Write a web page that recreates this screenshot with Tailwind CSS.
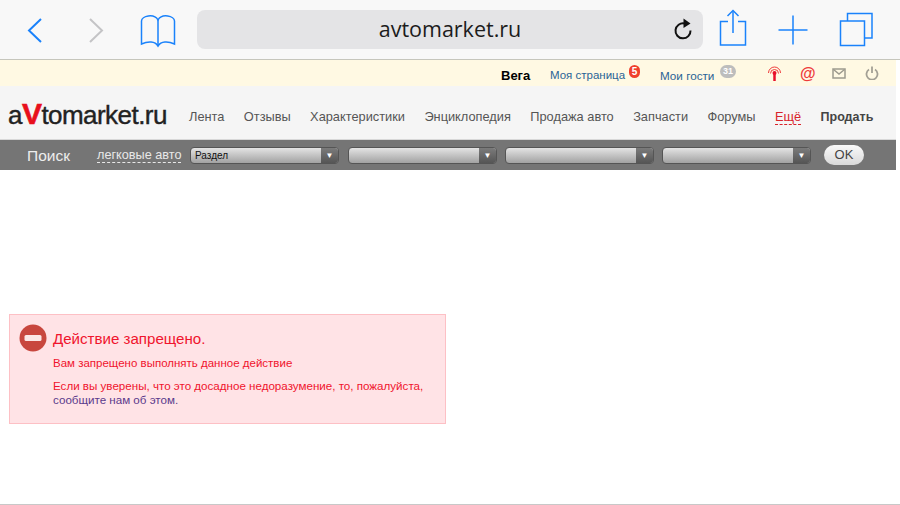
<!DOCTYPE html>
<html lang="ru">
<head>
    <meta charset="UTF-8">
    <title>avtomarket.ru</title>
    <script src="https://cdn.jsdelivr.net/npm/@tailwindcss/browser@4"></script>
</head>
<body class="w-[900px] h-[505px] overflow-hidden bg-white font-['Liberation_Sans',sans-serif] flex flex-col">
    <!-- safari toolbar -->
    <div class="h-[60px] shrink-0 bg-[#f8f8f8] border-b border-[#c6c6bc] flex items-center relative">
        <svg class="absolute left-[26px] top-[17px]" width="18" height="27" viewBox="0 0 18 27" fill="none" stroke="#1a82fb" stroke-width="2"><path d="M15 2 L3 13.5 L15 25"/></svg>
        <svg class="absolute left-[87px] top-[17px]" width="18" height="27" viewBox="0 0 18 27" fill="none" stroke="#c4c4c6" stroke-width="2"><path d="M3 2 L15 13.5 L3 25"/></svg>
        <svg class="absolute left-[140px] top-[14px]" width="36" height="34" viewBox="0 0 36 34" fill="none" stroke="#1a82fb" stroke-width="1.5"><path d="M1.5 30 V7 C1.5 2 14 -1 18 6 C22 -1 34.500 2 34.500 7 V30 C28 27 21 27 18 32 C15 27 8 27 1.500 30 Z"/><path d="M18 6 V32"/></svg>
        <div class="ml-[197px] w-[506px] h-[39px] rounded-lg bg-[#e4e4e6] flex items-center justify-center relative">
            <span class="text-[21.5px] text-[#1c1c1c] font-['Open_Sans',sans-serif]">avtomarket.ru</span>
            <svg class="absolute left-[476px] top-[8px]" width="20" height="23" viewBox="0 0 20 23" fill="none"><path d="M11.500 5.500 A7.500 7.500 0 1 0 17.500 12.500" stroke="#111" stroke-width="2"/><path d="M10.500 0.500 L17.500 5.500 L10.500 10 Z" fill="#111"/></svg>
        </div>
        <svg class="absolute left-[719px] top-[9px]" width="28" height="38" viewBox="0 0 28 38" fill="none" stroke="#1a82fb" stroke-width="1.500"><path d="M9 12.500 H1.500 V36 H26.500 V12.500 H19"/><path d="M14 24 V2.500"/><path d="M8.500 7 L14 1.500 L19.500 7"/></svg>
        <svg class="absolute left-[778px] top-[15px]" width="30" height="30" viewBox="0 0 30 30" fill="none" stroke="#1a82fb" stroke-width="1.500"><path d="M15 0.500 V29.500 M0.500 15 H29.500"/></svg>
        <svg class="absolute left-[839px] top-[12px]" width="35" height="35" viewBox="0 0 35 35" fill="none" stroke="#1a82fb" stroke-width="1.500"><rect x="1.500" y="9" width="24" height="24.500"/><path d="M8.500 9 V1.500 H33 V26 H25.500"/></svg>
    </div>

    <div class="w-[896px] flex flex-col">
        <!-- user bar -->
        <div class="h-[26px] bg-[#fff9e3] relative text-[#2a6496]">
            <span class="absolute left-[501px] top-[8px] text-[13px] leading-[15px] font-bold text-black">Вега</span>
            <span class="absolute left-[550px] top-[8px] text-[11.5px] leading-[15px]">Моя страница</span>
            <span class="absolute left-[629px] top-[5px] w-[11px] h-[13px] rounded-full bg-[#f0402c] text-white text-[10px] leading-[13px] text-center font-bold">5</span>
            <span class="absolute left-[660px] top-[8px] text-[11.7px] leading-[15px]">Мои гости</span>
            <span class="absolute left-[720px] top-[5px] w-[16px] h-[13px] rounded-full bg-[#bdbdbd] text-white text-[9px] leading-[13px] text-center font-bold">31</span>
            <svg class="absolute left-[767px] top-[6px]" width="15" height="16" viewBox="0 0 15 16" fill="none" stroke="#ee3b3b" stroke-width="1"><path d="M1.500 7 A6 6 0 0 1 13.500 7"/><path d="M3.500 7.500 A4 4 0 0 1 11.500 7.500"/><circle cx="7.500" cy="7" r="2" fill="#e8102a" stroke="none"/><path d="M7.500 8 V15" stroke="#e8102a" stroke-width="2.500"/></svg>
            <span class="absolute left-[800px] top-[5px] text-[16px] leading-[18px] font-bold text-[#ee3b3b]">@</span>
            <svg class="absolute left-[832px] top-[8px]" width="14" height="11" viewBox="0 0 14 11" fill="none" stroke="#9d9a8e" stroke-width="1.500"><rect x="1" y="1" width="12" height="9"/><path d="M1.500 1.500 L7 6 L12.500 1.500"/></svg>
            <svg class="absolute left-[865px] top-[6px]" width="14" height="14" viewBox="0 0 14 14" fill="none" stroke="#a3a095" stroke-width="1.800"><path d="M4 3.500 A5.500 5.500 0 1 0 10 3.500"/><path d="M7 0.500 V7"/></svg>
        </div>

        <!-- main nav -->
        <div class="h-[53px] bg-[#f5f5f5] flex items-center text-[12.8px] text-[#555]">
            <div class="ml-[8px] w-[181px] text-[26px] leading-[30px] tracking-[-0.55px] text-[#222] mt-[4px] [-webkit-text-stroke:0.4px_#222]">a<span class="text-[#e8101c] font-bold text-[30px] leading-[20px] [-webkit-text-stroke:0.6px_#e8101c]">V</span>tomarket.ru</div>
            <div class="flex gap-[19.4px] items-center mt-[9px]">
                <span>Лента</span>
                <span>Отзывы</span>
                <span>Характеристики</span>
                <span>Энциклопедия</span>
                <span>Продажа авто</span>
                <span>Запчасти</span>
                <span>Форумы</span>
                <span class="text-[#d8232a] border-b border-dashed border-[#d8232a] leading-[15px]">Ещё</span>
                <span class="font-bold text-[12.5px] text-[#444]">Продать</span>
            </div>
        </div>

        <!-- search bar -->
        <div class="h-[31px] bg-[#757575] border-t border-[#d8d8d8] flex items-center text-white">
            <span class="ml-[27px] mt-[1px] w-[70px] text-[15.5px] text-[#ededed]">Поиск</span>
            <span class="w-[84px] mr-[9px] text-[12.7px] leading-[14px] text-[#e8e8e8] border-b border-dashed border-[#e8e8e8] whitespace-nowrap">легковые авто</span>
            <div class="w-[149px] h-[17px] rounded-[4px] border border-[#555] bg-gradient-to-b from-[#e4e4e4] to-[#a2a2a2] flex justify-between overflow-hidden">
                <span class="pl-[4px] text-[10px] leading-[15px] text-[#111]">Раздел</span>
                <span class="w-[17px] bg-gradient-to-b from-[#7b7b7b] to-[#555] text-white text-[8px] leading-[15px] text-center">▼</span>
            </div>
            <div class="ml-[9px] w-[149px] h-[17px] rounded-[4px] border border-[#555] bg-gradient-to-b from-[#e4e4e4] to-[#a2a2a2] flex justify-end overflow-hidden">
                <span class="w-[17px] bg-gradient-to-b from-[#7b7b7b] to-[#555] text-white text-[8px] leading-[15px] text-center">▼</span>
            </div>
            <div class="ml-[8px] w-[149px] h-[17px] rounded-[4px] border border-[#555] bg-gradient-to-b from-[#e4e4e4] to-[#a2a2a2] flex justify-end overflow-hidden">
                <span class="w-[17px] bg-gradient-to-b from-[#7b7b7b] to-[#555] text-white text-[8px] leading-[15px] text-center">▼</span>
            </div>
            <div class="ml-[8px] w-[149px] h-[17px] rounded-[4px] border border-[#555] bg-gradient-to-b from-[#e4e4e4] to-[#a2a2a2] flex justify-end overflow-hidden">
                <span class="w-[17px] bg-gradient-to-b from-[#7b7b7b] to-[#555] text-white text-[8px] leading-[15px] text-center">▼</span>
            </div>
            <button class="ml-[13px] w-[40px] h-[20px] rounded-full bg-gradient-to-b from-[#fafafa] to-[#d9d9d9] text-[13px] text-[#444]">OK</button>
        </div>

        <!-- error box -->
        <div class="ml-[9px] mt-[144px] w-[437px] h-[110px] bg-[#ffe3e6] border border-[#fdc0c5] flex text-[#f0142d]">
            <svg class="ml-[9px] mt-[9px] shrink-0" width="28" height="28" viewBox="0 0 28 28"><circle cx="14" cy="14" r="13.500" fill="#c8473e"/><rect x="5.500" y="11" width="17" height="6" rx="1.500" fill="#fbe8e6"/></svg>
            <div class="ml-[6px] flex flex-col">
                <div class="mt-[15px] text-[15.1px] leading-[18px]">Действие запрещено.</div>
                <div class="mt-[8px] text-[11.5px] leading-[14px]">Вам запрещено выполнять данное действие</div>
                <div class="mt-[9px] text-[11.6px] leading-[13.5px] w-[380px]">Если вы уверены, что это досадное недоразумение, то, пожалуйста, <span class="text-[#5b3a8c]">сообщите нам об этом.</span></div>
            </div>
        </div>
    </div>

    <div class="mt-auto h-px bg-[#c8c8c8]"></div>
</body>
</html>
